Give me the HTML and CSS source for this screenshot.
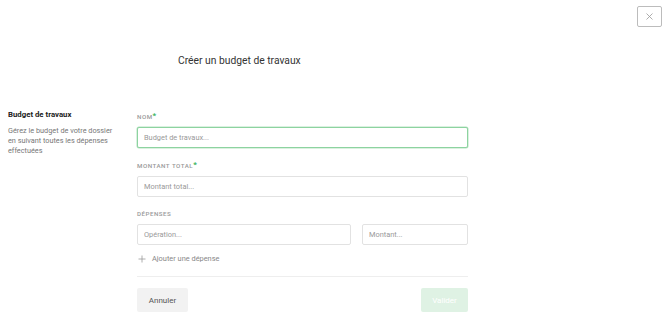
FILE: index.html
```html
<!DOCTYPE html>
<html lang="fr">
<head>
    <meta charset="UTF-8">
    <meta name="viewport" content="width=device-width, initial-scale=1.0">
    <title>Créer un budget de travaux</title>
    <link rel="stylesheet" href="styles.css">
</head>
<body>
    <!-- Barre du haut avec bouton fermer -->
    <div class="top-bar">
        <button class="close-button" aria-label="Fermer">
            <svg width="7" height="7" viewBox="0 0 7 7">
                <path d="M0.5 0.5 L6.5 6.5 M6.5 0.5 L0.5 6.5" stroke="#999" stroke-width="0.8" fill="none"/>
            </svg>
        </button>
    </div>

    <h1 class="page-title">Créer un budget de travaux</h1>

    <div class="container">
        <!-- Description à gauche -->
        <div class="sidebar">
            <h3>Budget de travaux</h3>
            <p>Gérez le budget de votre dossier en suivant toutes les dépenses effectuées</p>
        </div>

        <!-- Formulaire -->
        <form class="budget-form">
            <div class="field">
                <label for="nom">Nom<span class="required">*</span></label>
                <input type="text" id="nom" class="focused" placeholder="Budget de travaux...">
            </div>

            <div class="field">
                <label for="total">Montant total<span class="required">*</span></label>
                <input type="text" id="total" placeholder="Montant total...">
            </div>

            <div class="field last">
                <label>Dépenses</label>
                <div class="expense-row">
                    <input type="text" class="operation" placeholder="Opération...">
                    <input type="text" class="amount" placeholder="Montant...">
                </div>
            </div>

            <div class="add-expense">
                <svg class="plus" width="8" height="8" viewBox="0 0 8 8">
                    <path d="M4 0.5 V7.5 M0.5 4 H7.5" stroke="#999" stroke-width="0.8" fill="none"/>
                </svg>
                Ajouter une dépense
            </div>

            <div class="actions">
                <button type="button" class="cancel-button">Annuler</button>
                <button type="button" class="submit-button">Valider</button>
            </div>
        </form>
    </div>
</body>
</html>
```

FILE: styles.css
```css
/* Общие настройки */
body {
    font-family: Roboto, "Liberation Sans", sans-serif;
    margin: 0;
    padding: 0;
    color: #333;
    background: #fff;
}

/* Верхняя панель */
.top-bar {
    display: flex;
    justify-content: flex-end;
    padding: 6px 8px 0 0;
}

.close-button {
    width: 25px;
    height: 21px;
    padding: 0;
    border: 1px solid #bcbcbc;
    border-radius: 2px;
    background: #fff;
    display: flex;
    align-items: center;
    justify-content: center;
}

.page-title {
    margin: 27px 0 0 178px;
    font-size: 10.3px;
    line-height: 14px;
    font-weight: 400;
    color: #333;
}

/* Основная сетка */
.container {
    display: grid;
    grid-template-columns: 137px 331px;
    margin-top: 42px;
}

.sidebar {
    padding-left: 8px;
}

.sidebar h3 {
    margin: 0;
    font-size: 7.8px;
    line-height: 10px;
    font-weight: 700;
    color: #222;
}

.sidebar p {
    margin: 6px 0 0;
    font-size: 7.3px;
    line-height: 10px;
    color: #777;
    width: 112px;
}

/* Форма */
.budget-form {
    padding-top: 3px;
}

.field {
    margin-bottom: 13.5px;
}

.field.last {
    margin-bottom: 0;
}

.field label {
    display: block;
    font-size: 6.2px;
    font-weight: 500;
    line-height: 8px;
    letter-spacing: 0.5px;
    text-transform: uppercase;
    color: #999;
    margin-bottom: 6px;
}

.required {
    color: #3eb55f;
    font-weight: 700;
    font-size: 8px;
    line-height: 0;
    position: relative;
    top: -1px;
    letter-spacing: 0;
}

input[type="text"] {
    display: block;
    width: 100%;
    height: 21px;
    box-sizing: border-box;
    padding: 0 6px;
    border: 1px solid #e2e2e2;
    border-radius: 2px;
    font-family: inherit;
    font-size: 7.4px;
    color: #333;
    outline: none;
}

input::placeholder {
    color: #999;
}

input.focused {
    border-color: #8dd3a0;
    box-shadow: 0 0 0 0.5px #b6e3c2;
}

.expense-row {
    display: flex;
    gap: 11px;
}

.expense-row .operation {
    width: 214px;
}

.expense-row .amount {
    width: 106px;
}

/* Добавить расход */
.add-expense {
    display: flex;
    align-items: center;
    gap: 6px;
    margin-top: 9px;
    padding-left: 1px;
    font-size: 7.4px;
    line-height: 10px;
    color: #888;
    padding-bottom: 12px;
    border-bottom: 1px solid #eee;
}

/* Кнопки */
.actions {
    display: flex;
    justify-content: space-between;
    margin-top: 11px;
}

.actions button {
    height: 24px;
    border: none;
    border-radius: 2px;
    font-family: inherit;
    font-size: 8px;
    padding: 0;
    cursor: pointer;
}

.cancel-button {
    width: 51px;
    background: #f2f2f2;
    color: #555;
}

.submit-button {
    width: 47px;
    background: #dff2e4;
    color: #fff;
}
```
